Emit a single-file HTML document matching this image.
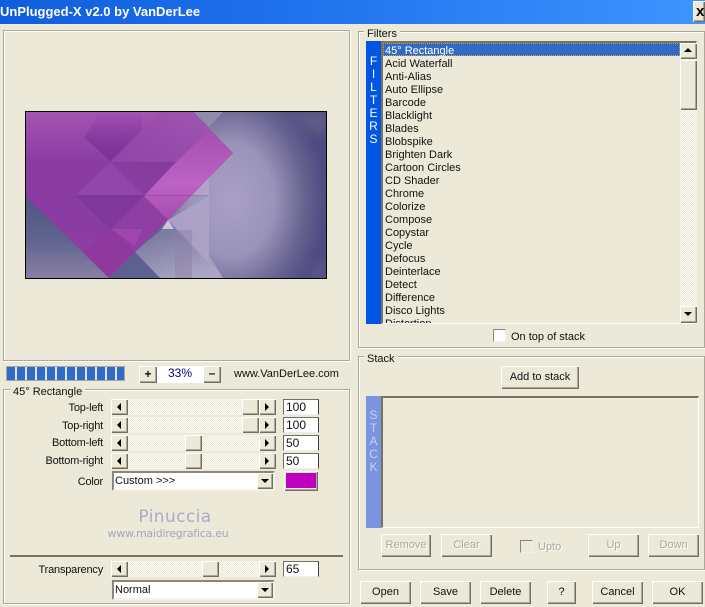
<!DOCTYPE html>
<html><head><meta charset="utf-8"><style>
html,body{margin:0;padding:0;background:#ece9d8}
#r{position:relative;width:705px;height:607px;overflow:hidden;background:#ece9d8;font:11px/14px "Liberation Sans",sans-serif;color:#111}
#r div{position:absolute;box-sizing:border-box}
.t{white-space:nowrap}
.g{border:1px solid #aca899;box-shadow:inset 1px 1px 0 #fff,1px 1px 0 #fff}
.lg{background:#ece9d8;padding:1px 3px 0;height:15px;white-space:nowrap}
.b{background:#ece9d8;box-shadow:inset 1px 1px 0 #fff,inset -1px -1px 0 #716f64,inset -2px -2px 0 #aca899;text-align:center;line-height:23px}
.d{color:#aca899;text-shadow:1px 1px 0 #fff}
.tr{width:0;height:0}
.pat{background:repeating-conic-gradient(#fbfaf5 0 25%,#ece9d8 0 50%) 0 0/2px 2px}
.inp{background:#fff;border-left:1px solid #716f64;border-top:1px solid #716f64;border-right:1px solid #404040;border-bottom:1px solid #eee;height:16px;width:36px;padding-left:2px;line-height:14px;font-size:12px}
.sel{background:#fff;border:2px solid;border-color:#8a8778 #f4f2e8 #f4f2e8 #8a8778;width:163px;height:20px;padding-left:1px;line-height:17px}
.l{right:602px;text-align:right;white-space:nowrap;letter-spacing:-.2px}
.i{left:385px;white-space:nowrap;width:290px}
.v{color:#fff;width:15px;text-align:center;left:366px;font-size:12px}
</style></head><body><div id="r">

<div style="left:0;top:0;width:705px;height:24px;background:linear-gradient(90deg,#0f5fdc 0%,#1f70ec 40%,#3d95ff 100%)"></div>
<div class="t" style="left:0;top:4px;color:#fff;font:bold 13px/16px 'Liberation Sans',sans-serif">UnPlugged-X v2.0 by VanDerLee</div>
<div class="b" style="left:693px;top:1px;width:12px;height:21px;font:bold 15px/21px 'Liberation Sans',sans-serif;color:#000;text-align:left;padding-left:3px;overflow:hidden">x</div>

<div class="g" style="left:3px;top:30px;width:347px;height:331px"></div>

<div style="left:25px;top:111px;width:302px;height:168px;border:1px solid #000;overflow:hidden">
<svg width="300" height="166" viewBox="0 0 300 166" style="display:block">
<defs>
<radialGradient id="a" gradientUnits="userSpaceOnUse" cx="205" cy="88" r="100" gradientTransform="translate(205 88) scale(.95 1.25) translate(-205 -88)">
<stop offset="0" stop-color="#a9a0c6"/><stop offset=".45" stop-color="#9a93ba"/><stop offset=".78" stop-color="#66628f"/><stop offset="1" stop-color="#4e4b82"/></radialGradient>
<linearGradient id="p" x1="0" y1="0" x2="0" y2="1"><stop offset="0" stop-color="#a353b2"/><stop offset=".3" stop-color="#8a3ca2"/><stop offset=".7" stop-color="#8a3ca2"/><stop offset="1" stop-color="#963fa5"/></linearGradient>
<linearGradient id="bl" x1="0" y1="0" x2="0" y2="1"><stop offset="0" stop-color="#4f5280"/><stop offset=".55" stop-color="#5e648f"/><stop offset="1" stop-color="#8a7fa3"/></linearGradient>
<linearGradient id="hl" x1="0" y1="0" x2="0" y2="1"><stop offset="0" stop-color="#a350ae"/><stop offset=".6" stop-color="#bc62c4"/><stop offset="1" stop-color="#a44cad"/></linearGradient>
<linearGradient id="tw" x1="0" y1="0" x2="0" y2="1"><stop offset="0" stop-color="#7a3096" stop-opacity="0"/><stop offset="1" stop-color="#7a3096"/></linearGradient>
<linearGradient id="tb" x1="0" y1="1" x2="1" y2="0"><stop offset="0" stop-color="#8f44a7"/><stop offset="1" stop-color="#a055b2"/></linearGradient>
<linearGradient id="g1" x1="0" y1="0" x2=".6" y2="1"><stop offset="0" stop-color="#6f7199"/><stop offset="1" stop-color="#aaa5c4"/></linearGradient>
<filter id="bb" x="-10%" y="-10%" width="120%" height="120%"><feGaussianBlur stdDeviation="6"/></filter>
</defs>
<rect width="300" height="166" fill="#4e4b82"/>
<rect width="300" height="166" fill="url(#a)"/>
<polygon points="262,0 300,0 300,25 285,18" fill="#6e6888" opacity=".7" filter="url(#bb)"/>
<polygon points="280,166 300,166 300,145" fill="#6e6888" opacity=".6" filter="url(#bb)"/>
<polygon points="167,0 197,0 183,15" fill="#8f8bad"/>
<rect x="0" y="80" width="130" height="86" fill="url(#bl)"/>
<polygon points="136,117 167,117 197,166 109,166 109,140" fill="url(#g1)"/>
<polygon points="142,108 148,117 136,117" fill="#c8c4dc"/>
<polygon points="142,108 183,84 183,166 197,166" fill="#aea3c8" opacity=".9"/>
<rect x="149" y="118" width="17" height="48" fill="#8d7fa6" opacity=".45"/>
<polygon points="109,140 83,166 134,166" fill="#5c6190"/>
<polygon points="150,84 183,84 183,50 178,50" fill="#b9aed0" opacity=".6"/>
<polygon points="0,0 167,0 207,41 83,166 0,85" fill="url(#p)"/>
<polygon points="58,25 84,49 116,18 116,0 75,0" fill="url(#tw)"/>
<polygon points="116,18 135,0 168,0 184,18 150,50 85,50" fill="url(#tb)"/>
<polygon points="150,50 184,18 207,41 142,108 118,84" fill="url(#hl)"/>
<polygon points="85,50 150,50 118,83" fill="#8a3b9f"/>
<polygon points="84,50 118,83 50,83" fill="#9046a8"/>
<polygon points="50,84 118,84 84,117" fill="#7f379b"/>
<polygon points="118,84 142,108 109,140 86,116" fill="#8f3fa4"/>
<polygon points="84,117 109,140 83,166 57,140" fill="#8f389e"/>
<polygon points="86,117 116,117 109,134" fill="#a246af"/>
<rect x="52" y="83" width="130" height="1" fill="#6c2a88" opacity=".3"/>
</svg></div>

<div style="left:6px;top:366px;width:119px;height:15px;border:1px solid #aca899;background:#fff;padding:0"></div>
<div style="left:7px;top:367px;width:117px;height:13px;background:repeating-linear-gradient(90deg,#2f6bc8 0 8px,#dfe6f2 8px 10px)"></div>
<div class="b" style="left:139px;top:366px;width:18px;height:17px;font:bold 12px/16px 'Liberation Sans',sans-serif">+</div>
<div style="left:157px;top:366px;width:46px;height:17px;background:#fff;text-align:center;color:#000080;line-height:15px;font-size:12px">33%</div>
<div class="b" style="left:203px;top:366px;width:18px;height:17px;font:bold 12px/15px 'Liberation Sans',sans-serif">–</div>
<div class="t" style="left:234px;top:367px">www.VanDerLee.com</div>

<div class="g" style="left:3px;top:389px;width:347px;height:215px"></div>
<div class="lg" style="left:10px;top:384px">45° Rectangle</div>

<div class="l t" style="top:401px">Top-left</div>
<div class="l t" style="top:419px">Top-right</div>
<div class="l t" style="top:436px">Bottom-left</div>
<div class="l t" style="top:454px">Bottom-right</div>
<div class="l t" style="top:475px">Color</div>
<div class="l t" style="top:563px">Transparency</div>

<!-- scrollbars -->
<div class="pat" style="left:111px;top:399px;width:165px;height:16px"></div>
<div class="pat" style="left:111px;top:417px;width:165px;height:16px"></div>
<div class="pat" style="left:111px;top:435px;width:165px;height:16px"></div>
<div class="pat" style="left:111px;top:453px;width:165px;height:16px"></div>
<div class="pat" style="left:111px;top:561px;width:165px;height:16px"></div>

<div class="b" style="left:111px;top:399px;width:17px;height:16px"></div><div class="b" style="left:259px;top:399px;width:17px;height:16px"></div><div class="b" style="left:242px;top:399px;width:17px;height:16px"></div>
<div class="b" style="left:111px;top:417px;width:17px;height:16px"></div><div class="b" style="left:259px;top:417px;width:17px;height:16px"></div><div class="b" style="left:242px;top:417px;width:17px;height:16px"></div>
<div class="b" style="left:111px;top:435px;width:17px;height:16px"></div><div class="b" style="left:259px;top:435px;width:17px;height:16px"></div><div class="b" style="left:185px;top:435px;width:17px;height:16px"></div>
<div class="b" style="left:111px;top:453px;width:17px;height:16px"></div><div class="b" style="left:259px;top:453px;width:17px;height:16px"></div><div class="b" style="left:185px;top:453px;width:17px;height:16px"></div>
<div class="b" style="left:111px;top:561px;width:17px;height:16px"></div><div class="b" style="left:259px;top:561px;width:17px;height:16px"></div><div class="b" style="left:202px;top:561px;width:17px;height:16px"></div>

<!-- arrows -->
<div class="tr" style="left:117px;top:403px;border:4px solid transparent;border-left:0;border-right:4px solid #000"></div>
<div class="tr" style="left:265px;top:403px;border:4px solid transparent;border-right:0;border-left:4px solid #000"></div>
<div class="tr" style="left:117px;top:421px;border:4px solid transparent;border-left:0;border-right:4px solid #000"></div>
<div class="tr" style="left:265px;top:421px;border:4px solid transparent;border-right:0;border-left:4px solid #000"></div>
<div class="tr" style="left:117px;top:439px;border:4px solid transparent;border-left:0;border-right:4px solid #000"></div>
<div class="tr" style="left:265px;top:439px;border:4px solid transparent;border-right:0;border-left:4px solid #000"></div>
<div class="tr" style="left:117px;top:457px;border:4px solid transparent;border-left:0;border-right:4px solid #000"></div>
<div class="tr" style="left:265px;top:457px;border:4px solid transparent;border-right:0;border-left:4px solid #000"></div>
<div class="tr" style="left:117px;top:565px;border:4px solid transparent;border-left:0;border-right:4px solid #000"></div>
<div class="tr" style="left:265px;top:565px;border:4px solid transparent;border-right:0;border-left:4px solid #000"></div>

<div class="inp" style="left:283px;top:399px">100</div>
<div class="inp" style="left:283px;top:417px">100</div>
<div class="inp" style="left:283px;top:435px">50</div>
<div class="inp" style="left:283px;top:453px">50</div>
<div class="inp" style="left:283px;top:561px">65</div>

<div class="sel" style="left:112px;top:471px">Custom &gt;&gt;&gt;</div>
<div class="b" style="left:257px;top:473px;width:16px;height:16px"></div>
<div class="tr" style="left:261px;top:479px;border:4px solid transparent;border-bottom:0;border-top:4px solid #000"></div>
<div class="b" style="left:284px;top:471px;width:34px;height:20px"></div>
<div style="left:286px;top:473px;width:30px;height:15px;background:#bf00bf"></div>

<div class="t" style="left:0;width:350px;text-align:center;top:507px;font:17px/20px 'DejaVu Sans',sans-serif;color:#aaaaca;letter-spacing:.4px">Pinuccia</div>
<div class="t" style="left:0;width:336px;text-align:center;top:527px;font:11px/14px 'DejaVu Sans',sans-serif;color:#a6a6c2;letter-spacing:-.25px">www.maidiregrafica.eu</div>

<div style="left:10px;top:555px;width:333px;height:2px;background:#77735f"></div>

<div class="sel" style="left:112px;top:580px">Normal</div>
<div class="b" style="left:257px;top:582px;width:16px;height:16px"></div>
<div class="tr" style="left:261px;top:588px;border:4px solid transparent;border-bottom:0;border-top:4px solid #000"></div>

<!-- Filters -->
<div class="g" style="left:358px;top:31px;width:347px;height:317px"></div>
<div class="lg" style="left:364px;top:26px">Filters</div>
<div style="left:366px;top:41px;width:15px;height:283px;background:#0055e5"></div>
<div class="v" style="top:54px">F</div><div class="v" style="top:67px">I</div><div class="v" style="top:80px">L</div><div class="v" style="top:93px">T</div><div class="v" style="top:106px">E</div><div class="v" style="top:119px">R</div><div class="v" style="top:132px">S</div>

<div style="left:381px;top:41px;width:316px;height:283px;border:2px solid;border-color:#77735f #fff #fff #77735f;border-right-width:1px;border-bottom-width:1px;overflow:hidden"></div>
<div style="left:383px;top:43px;width:297px;height:13px;background:#316ac5;outline:1px dotted #d8a050;outline-offset:-1px"></div>
<div style="left:382px;top:42px;width:298px;height:281px;overflow:hidden">
<div class="i" style="left:3px;top:2px;color:#fff">45° Rectangle</div>
<div class="i" style="left:3px;top:15px">Acid Waterfall</div>
<div class="i" style="left:3px;top:28px">Anti-Alias</div>
<div class="i" style="left:3px;top:41px">Auto Ellipse</div>
<div class="i" style="left:3px;top:54px">Barcode</div>
<div class="i" style="left:3px;top:67px">Blacklight</div>
<div class="i" style="left:3px;top:80px">Blades</div>
<div class="i" style="left:3px;top:93px">Blobspike</div>
<div class="i" style="left:3px;top:106px">Brighten Dark</div>
<div class="i" style="left:3px;top:119px">Cartoon Circles</div>
<div class="i" style="left:3px;top:132px">CD Shader</div>
<div class="i" style="left:3px;top:145px">Chrome</div>
<div class="i" style="left:3px;top:158px">Colorize</div>
<div class="i" style="left:3px;top:171px">Compose</div>
<div class="i" style="left:3px;top:184px">Copystar</div>
<div class="i" style="left:3px;top:197px">Cycle</div>
<div class="i" style="left:3px;top:210px">Defocus</div>
<div class="i" style="left:3px;top:223px">Deinterlace</div>
<div class="i" style="left:3px;top:236px">Detect</div>
<div class="i" style="left:3px;top:249px">Difference</div>
<div class="i" style="left:3px;top:262px">Disco Lights</div>
<div class="i" style="left:3px;top:275px">Distortion</div>
</div>
<div class="pat" style="left:680px;top:43px;width:17px;height:280px"></div>
<div class="b" style="left:680px;top:43px;width:17px;height:16px"></div>
<div class="tr" style="left:684px;top:48px;border:4px solid transparent;border-top:0;border-bottom:4px solid #000"></div>
<div class="b" style="left:680px;top:60px;width:17px;height:50px"></div>
<div class="b" style="left:680px;top:306px;width:17px;height:17px"></div>
<div class="tr" style="left:684px;top:312px;border:4px solid transparent;border-bottom:0;border-top:4px solid #000"></div>

<div style="left:493px;top:329px;width:13px;height:13px;background:#fff;border:1px solid;border-color:#8a8778 #f4f2e8 #f4f2e8 #8a8778"></div>
<div class="t" style="left:511px;top:330px">On top of stack</div>

<!-- Stack -->
<div class="g" style="left:358px;top:356px;width:347px;height:214px"></div>
<div class="lg" style="left:364px;top:351px">Stack</div>
<div class="b" style="left:501px;top:366px;width:78px;height:23px">Add to stack</div>
<div style="left:366px;top:396px;width:15px;height:132px;background:#7b94e0"></div>
<div class="v" style="top:408px;color:#c6d2f4">S</div><div class="v" style="top:421px;color:#c6d2f4">T</div><div class="v" style="top:434px;color:#c6d2f4">A</div><div class="v" style="top:447px;color:#c6d2f4">C</div><div class="v" style="top:460px;color:#c6d2f4">K</div>
<div style="left:381px;top:396px;width:318px;height:132px;border:2px solid;border-color:#77735f #fff #fff #77735f;border-right-width:1px;border-bottom-width:1px"></div>

<div class="b d" style="left:381px;top:534px;width:50px;height:23px">Remove</div>
<div class="b d" style="left:441px;top:534px;width:51px;height:23px">Clear</div>
<div style="left:520px;top:540px;width:13px;height:13px;background:#ece9d8;border:1px solid;border-color:#8a8778 #f4f2e8 #f4f2e8 #8a8778"></div>
<div class="t d" style="left:538px;top:540px">Upto</div>
<div class="b d" style="left:588px;top:534px;width:51px;height:23px">Up</div>
<div class="b d" style="left:648px;top:534px;width:51px;height:23px">Down</div>

<div class="b" style="left:360px;top:581px;width:51px;height:23px">Open</div>
<div class="b" style="left:420px;top:581px;width:51px;height:23px">Save</div>
<div class="b" style="left:480px;top:581px;width:51px;height:23px">Delete</div>
<div class="b" style="left:547px;top:581px;width:29px;height:23px">?</div>
<div class="b" style="left:592px;top:581px;width:51px;height:23px">Cancel</div>
<div class="b" style="left:652px;top:581px;width:51px;height:23px">OK</div>

</div></body></html>
